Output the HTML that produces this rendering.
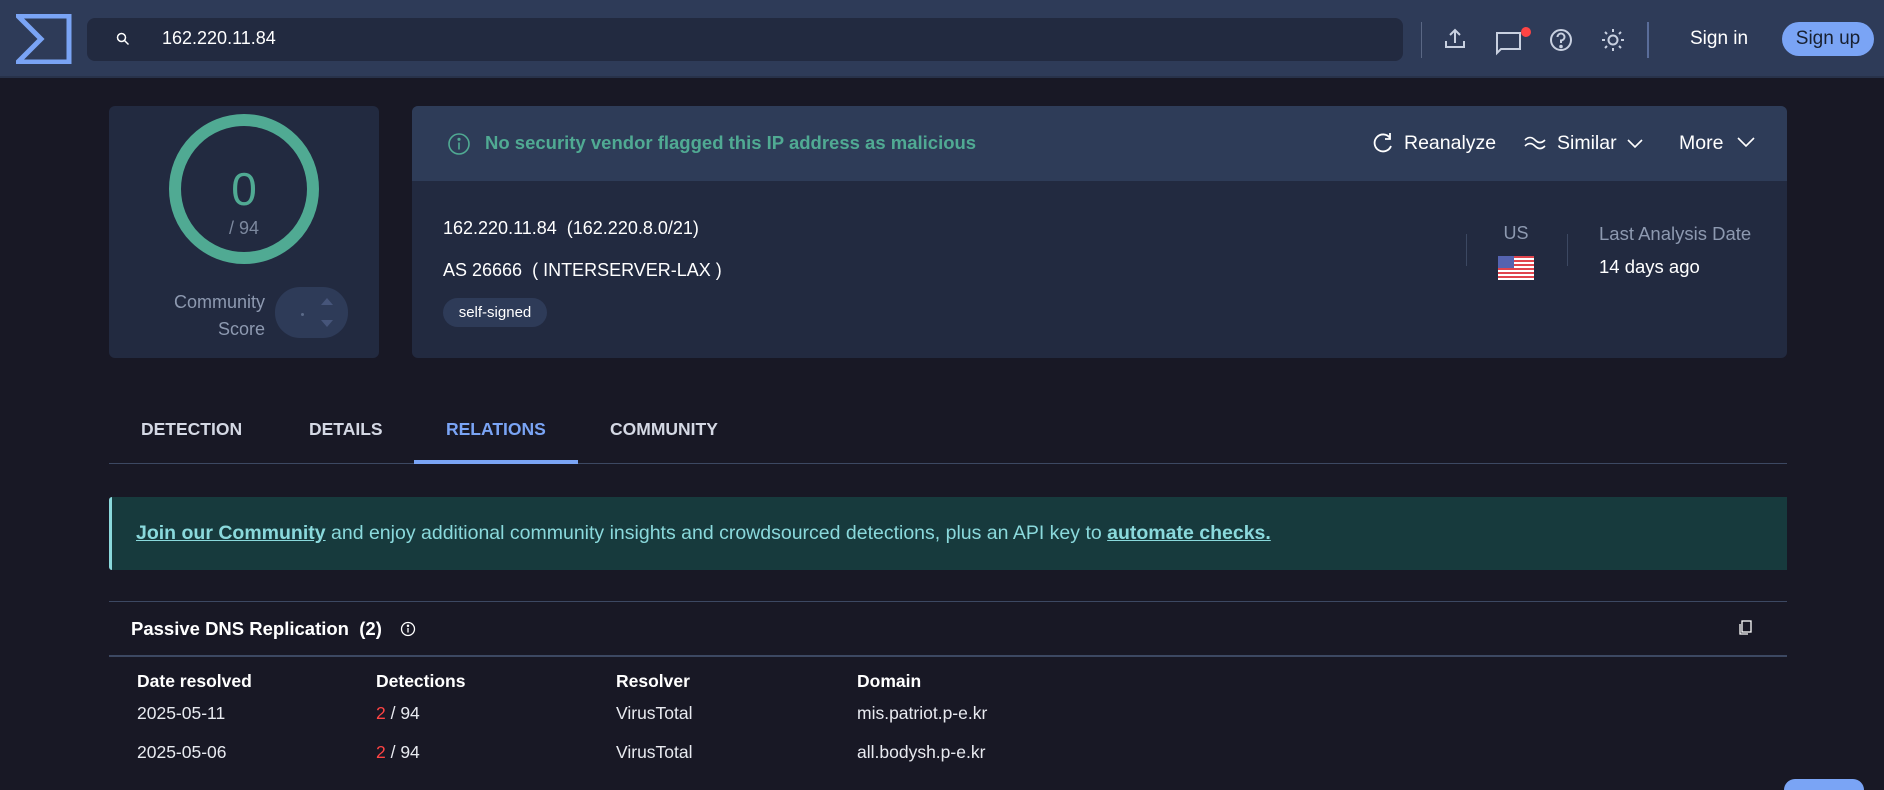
<!DOCTYPE html>
<html style="overflow:hidden;width:1884px;height:790px"><head><meta charset="utf-8"><style>
*{margin:0;padding:0;box-sizing:border-box}
body{width:1884px;height:790px;background:#181825;font-family:"Liberation Sans",sans-serif;color:#fff;position:relative;overflow:hidden}
.a{position:absolute}
.hdr{left:0;top:0;width:1884px;height:78px;background:#2e3b58;border-bottom:2px solid #28324a}
.srch{left:87px;top:18px;width:1316px;height:43px;background:#222a40;border-radius:8px}
.card{background:#222a40;border-radius:6px}
.t{white-space:nowrap}
.tab{top:419px;font-size:17.5px;font-weight:bold;color:#d4d8e4}
.th{top:671px;font-size:17.5px;font-weight:bold}
.td{font-size:17.5px;color:#e8eaf0}
</style></head><body>
<div class="a hdr"></div>
<svg class="a" style="left:16px;top:14px" width="56" height="50" viewBox="0 0 56 50"><path d="M2 2H53V48H2L25 25Z" fill="none" stroke="#7aa4f5" stroke-width="5" stroke-linejoin="miter"/></svg>
<div class="a srch"></div>
<svg class="a" style="left:116px;top:32px" width="14" height="14" viewBox="0 0 14 14"><circle cx="5.5" cy="5.5" r="4" fill="none" stroke="#fff" stroke-width="1.5"/><path d="M8.5 8.5L12.5 12.5" stroke="#fff" stroke-width="1.5"/></svg>
<div class="a t" style="left:162px;top:28px;font-size:18px;color:#fff">162.220.11.84</div>
<div class="a" style="left:1421px;top:22px;width:1px;height:36px;background:#5a6784"></div>
<svg class="a" style="left:1440px;top:25px" width="190" height="32" viewBox="0 0 190 32" fill="none" stroke="#c8d0e0" stroke-width="2">
<path d="M15 5V18M10 10L15 5L20 10M6 16V22H24V16"/>
<path d="M57 8H80V24H61L57 28Z"/>
<circle cx="86" cy="7" r="5" fill="#f44" stroke="none"/>
<circle cx="121" cy="15" r="10"/><path d="M117.5 12A3.5 3.5 0 1 1 121 15.5V18" /><circle cx="121" cy="21.5" r="0.8" fill="#c8d0e0"/>
<circle cx="173" cy="15" r="4.5"/><path d="M173 4V7M173 23V26M162 15H165M181 15H184M165 7L167 9M179 21L181 23M165 23L167 21M179 9L181 7"/>
</svg>
<div class="a" style="left:1647px;top:22px;width:2px;height:36px;background:#5a6d9a"></div>
<div class="a t" style="left:1690px;top:28px;font-size:19px">Sign in</div>
<div class="a" style="left:1782px;top:22px;width:92px;height:34px;background:#7aa4f5;border-radius:17px;color:#182030;font-size:19px;text-align:center;line-height:34px">Sign up</div>

<div class="a card" style="left:109px;top:106px;width:270px;height:252px"></div>
<svg class="a" style="left:168px;top:113px" width="152" height="152"><circle cx="76" cy="76" r="69" fill="none" stroke="#50aa93" stroke-width="12"/></svg>
<div class="a t" style="left:214px;top:162px;width:60px;text-align:center;font-size:46px;color:#50aa93">0</div>
<div class="a t" style="left:214px;top:218px;width:60px;text-align:center;font-size:18px;color:#7c889e">/ 94</div>
<div class="a t" style="left:140px;top:289px;width:125px;text-align:right;font-size:18px;color:#8d99b0;line-height:27px">Community<br>Score</div>
<div class="a" style="left:275px;top:287px;width:73px;height:51px;background:#2e3b58;border-radius:25px"></div>
<div class="a" style="left:301px;top:313px;width:3px;height:3px;background:#5b6a88;border-radius:2px"></div>
<svg class="a" style="left:320px;top:297px" width="14" height="32"><path d="M1 8L7 1L13 8Z M1 23L7 30L13 23Z" fill="#46557a"/></svg>

<div class="a card" style="left:412px;top:106px;width:1375px;height:252px"></div>
<div class="a" style="left:412px;top:106px;width:1375px;height:75px;background:#2e3c58;border-radius:6px 6px 0 0"></div>
<svg class="a" style="left:447px;top:132px" width="24" height="24" fill="none" stroke="#50aa93" stroke-width="1.6"><circle cx="12" cy="12" r="10"/><path d="M12 10.5V17.5"/><circle cx="12" cy="7.3" r=".8" fill="#50aa93"/></svg>
<div class="a t" style="left:485px;top:132px;font-size:18.5px;font-weight:bold;color:#50aa93">No security vendor flagged this IP address as malicious</div>
<svg class="a" style="left:1372px;top:132px" width="22" height="22" fill="none" stroke="#fff" stroke-width="1.8"><path d="M18 6A8.5 8.5 0 1 0 19 14"/><path d="M18 1V7H13" /></svg>
<div class="a t" style="left:1404px;top:132px;font-size:19.5px">Reanalyze</div>
<svg class="a" style="left:1523px;top:133px" width="24" height="20" fill="none" stroke="#fff" stroke-width="1.6"><path d="M2 7Q7 2 12 7T22 7M2 13Q7 8 12 13T22 13"/></svg>
<div class="a t" style="left:1557px;top:132px;font-size:19.5px">Similar</div>
<svg class="a" style="left:1627px;top:138px" width="16" height="12" fill="none" stroke="#fff" stroke-width="1.6"><path d="M1 2L8 9L15 2"/></svg>
<div class="a t" style="left:1679px;top:132px;font-size:19.5px">More</div>
<svg class="a" style="left:1737px;top:136px" width="18" height="12" fill="none" stroke="#fff" stroke-width="1.6"><path d="M1 2L9 10L17 2"/></svg>

<div class="a t" style="left:443px;top:218px;font-size:18px">162.220.11.84&nbsp; (162.220.8.0/21)</div>
<div class="a t" style="left:443px;top:260px;font-size:18px">AS 26666&nbsp; ( INTERSERVER-LAX )</div>
<div class="a t" style="left:443px;top:298px;width:104px;height:29px;background:#2e3b58;border-radius:15px;font-size:15px;text-align:center;line-height:29px">self-signed</div>
<div class="a" style="left:1466px;top:234px;width:1px;height:32px;background:#3c4862"></div>
<div class="a" style="left:1567px;top:234px;width:1px;height:32px;background:#3c4862"></div>
<div class="a t" style="left:1496px;top:223px;width:40px;text-align:center;font-size:18px;color:#8d99b0">US</div>
<svg class="a" style="left:1498px;top:256px" width="36" height="24"><rect width="36" height="24" fill="#fff"/><g fill="#e0444d"><rect y="0" width="36" height="2"/><rect y="4" width="36" height="2"/><rect y="8" width="36" height="2"/><rect y="12" width="36" height="2"/><rect y="16" width="36" height="2"/><rect y="20" width="36" height="2"/></g><rect width="16" height="12" fill="#5563b0"/></svg>
<div class="a t" style="left:1599px;top:223px;font-size:18.5px;color:#8d99b0">Last Analysis Date</div>
<div class="a t" style="left:1599px;top:256px;font-size:18.5px">14 days ago</div>

<div class="a t tab" style="left:141px">DETECTION</div>
<div class="a t tab" style="left:309px">DETAILS</div>
<div class="a t tab" style="left:446px;color:#7aa4f5">RELATIONS</div>
<div class="a t tab" style="left:610px">COMMUNITY</div>
<div class="a" style="left:109px;top:463px;width:1678px;height:1px;background:#3c4862"></div>
<div class="a" style="left:414px;top:460px;width:164px;height:4px;background:#7aa4f5"></div>

<div class="a" style="left:109px;top:497px;width:1678px;height:73px;background:#173a3d;border-left:3px solid #8ad9dc;border-radius:3px 0 0 3px"></div>
<div class="a t" style="left:136px;top:522px;font-size:19.5px;color:#8ad9dc"><b style="text-decoration:underline">Join our Community</b> and enjoy additional community insights and crowdsourced detections, plus an API key to <b style="text-decoration:underline">automate checks.</b></div>

<div class="a" style="left:109px;top:601px;width:1678px;height:1px;background:#3c4862"></div>
<div class="a t" style="left:131px;top:618px;font-size:18.5px;font-weight:bold">Passive DNS Replication&nbsp; (2)</div>
<svg class="a" style="left:400px;top:621px" width="16" height="16" fill="none" stroke="#fff" stroke-width="1.3"><circle cx="8" cy="8" r="6.5"/><path d="M8 7V11.5"/><circle cx="8" cy="4.8" r=".6" fill="#fff"/></svg>
<svg class="a" style="left:1738px;top:620px" width="14" height="16" fill="none" stroke="#fff" stroke-width="1.3"><rect x="4" y="1" width="9" height="11"/><path d="M2 4V14H10"/></svg>
<div class="a" style="left:109px;top:655px;width:1678px;height:2px;background:#3c4862"></div>
<div class="a t th" style="left:137px">Date resolved</div>
<div class="a t th" style="left:376px">Detections</div>
<div class="a t th" style="left:616px">Resolver</div>
<div class="a t th" style="left:857px">Domain</div>
<div class="a t td" style="left:137px;top:703px">2025-05-11</div>
<div class="a t td" style="left:376px;top:703px"><span style="color:#f44">2</span> / 94</div>
<div class="a t td" style="left:616px;top:703px">VirusTotal</div>
<div class="a t td" style="left:857px;top:703px">mis.patriot.p-e.kr</div>
<div class="a t td" style="left:137px;top:742px">2025-05-06</div>
<div class="a t td" style="left:376px;top:742px"><span style="color:#f44">2</span> / 94</div>
<div class="a t td" style="left:616px;top:742px">VirusTotal</div>
<div class="a t td" style="left:857px;top:742px">all.bodysh.p-e.kr</div>
<div class="a" style="left:1784px;top:779px;width:80px;height:11px;border-radius:40px 40px 0 0;background:#7aa4f5"></div>
</body></html>
